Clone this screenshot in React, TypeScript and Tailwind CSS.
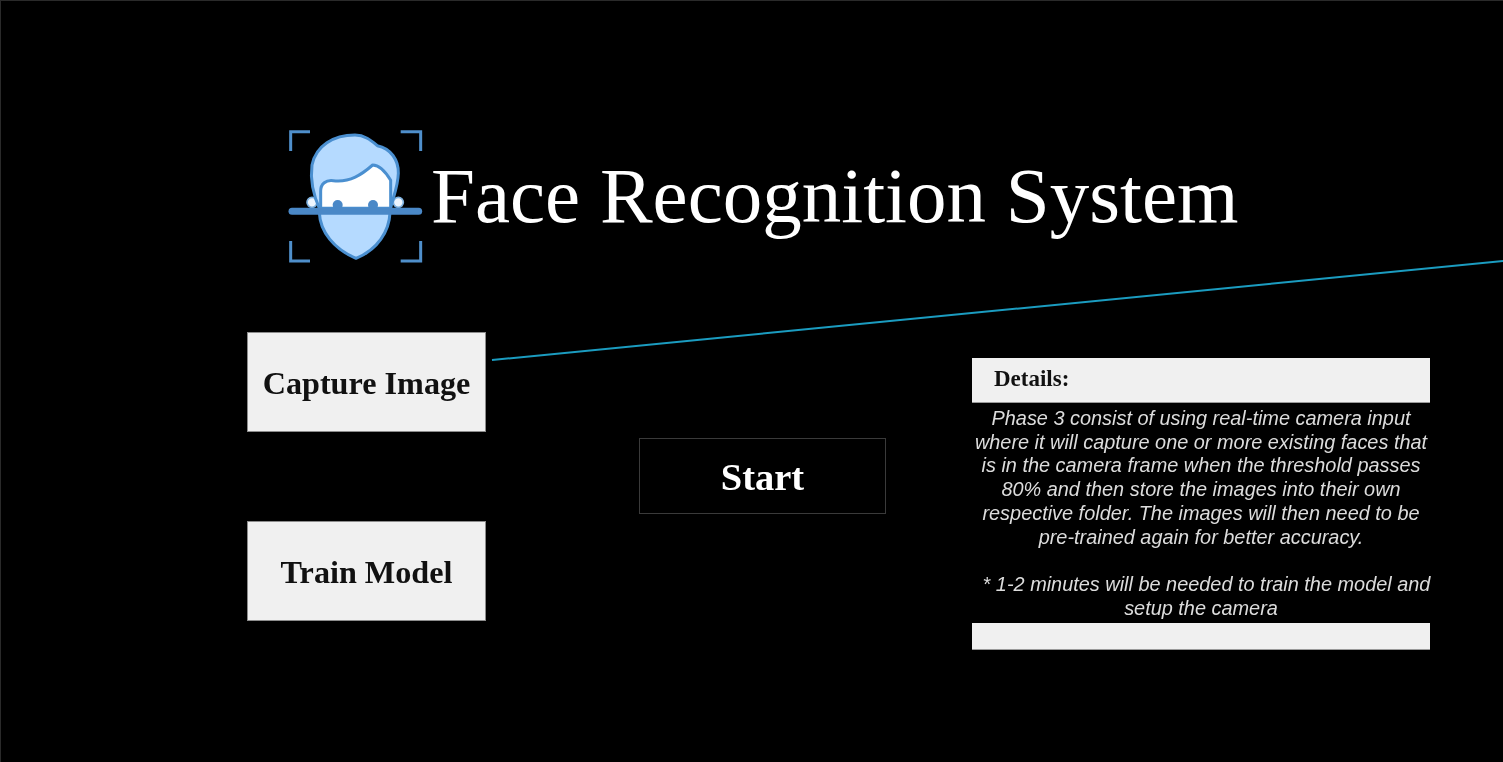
const serif = "font-['Liberation_Serif','Times_New_Roman',serif]";

const detailLines = [
  'Phase 3 consist of using real-time camera input',
  'where it will capture one or more existing faces that',
  'is in the camera frame when the threshold passes',
  '80% and then store the images into their own',
  'respective folder. The images will then need to be',
  'pre-trained again for better accuracy.',
];

function FaceLogo() {
  return (
    <svg width="170" height="160" viewBox="0 0 510 480" fill="none" className="shrink-0">
      <g stroke="#4f8fcb" strokeWidth="9">
        <path d="M62 108V50H120" />
        <path d="M392 50H452V108" />
        <path d="M62 378V438H120" />
        <path d="M392 438H452V378" />
      </g>
      <g stroke="#7fb2e0" strokeWidth="5">
        <circle cx="126" cy="262" r="15" fill="#eef6ff" />
        <circle cx="385" cy="262" r="15" fill="#eef6ff" />
      </g>
      <g stroke="#4a8fd0" strokeWidth="9" strokeLinejoin="round">
        <path
          d="M150 285C132 245 120 195 126 150C138 92 190 60 255 60C285 60 305 78 322 92C362 100 386 135 385 175C384 215 370 245 360 285Z"
          fill="#b5daff"
        />
        <path
          d="M152 280V228C152 206 168 194 190 197C240 203 276 178 308 150C332 150 350 176 362 196V280Z"
          fill="#ffffff"
        />
        <path d="M148 292C150 350 192 402 258 430C322 404 358 350 360 292Z" fill="#b5daff" />
      </g>
      <circle cx="203" cy="270" r="15" fill="#4a88c7" />
      <circle cx="309" cy="270" r="15" fill="#4a88c7" />
      <path d="M66 289H446" stroke="#4a88c7" strokeWidth="21" strokeLinecap="round" />
    </svg>
  );
}

function ActionButton({ label }: { label: string }) {
  return (
    <button className={`flex h-[100px] w-[239px] items-center justify-center border border-[#8c8c8c] bg-[#f0f0f0] pt-[2px] text-[32.2px] font-bold text-[#111] ${serif}`}>
      {label}
    </button>
  );
}

export default function App() {
  return (
    <div className="relative h-[762px] w-[1503px] overflow-hidden border-l border-t border-[#2a2a2a] bg-black blur-[0.6px]">
      <svg className="absolute left-0 top-0" width="1503" height="762" fill="none">
        <path d="M491 359L1503 260" stroke="#1b9cc0" strokeWidth="2" />
      </svg>

      <div className="flex pl-[269px] pt-[114px]">
        <FaceLogo />
        <h1 className={`-ml-[9px] mt-[33px] text-[79px] leading-[96px] text-white ${serif}`}>
          Face Recognition System
        </h1>
      </div>

      <div className="mt-[57px] flex pl-[246px]">
        <div className="flex flex-col gap-[89px]">
          <ActionButton label="Capture Image" />
          <ActionButton label="Train Model" />
        </div>

        <button className={`ml-[153px] mt-[106px] flex h-[76px] w-[247px] items-center justify-center border border-[#3a3a3a] bg-black pt-[4px] text-[38.5px] font-bold text-white ${serif}`}>
          Start
        </button>

        <div className="ml-[86px] mt-[26px] flex w-[458px] flex-col">
          <div className={`h-[45px] border-b border-[#9a9a9a] bg-[#f0f0f0] pl-[22px] pt-[8px] text-[23px] font-bold leading-[26px] text-[#111] ${serif}`}>
            Details:
          </div>
          <div className="flex h-[220px] flex-col items-center pt-[4px] font-['Liberation_Sans',Arial,sans-serif] text-[19.9px] italic leading-[23.7px] text-[#dcdcdc]">
            {detailLines.map((line) => (
              <div key={line} className="whitespace-nowrap">{line}</div>
            ))}
            <div className="h-[23.7px]" />
            <div className="whitespace-nowrap pl-[11px]">* 1-2 minutes will be needed to train the model and</div>
            <div className="whitespace-nowrap">setup the camera</div>
          </div>
          <div className="h-[27px] border-b border-[#9a9a9a] bg-[#f0f0f0]" />
        </div>
      </div>
    </div>
  );
}
